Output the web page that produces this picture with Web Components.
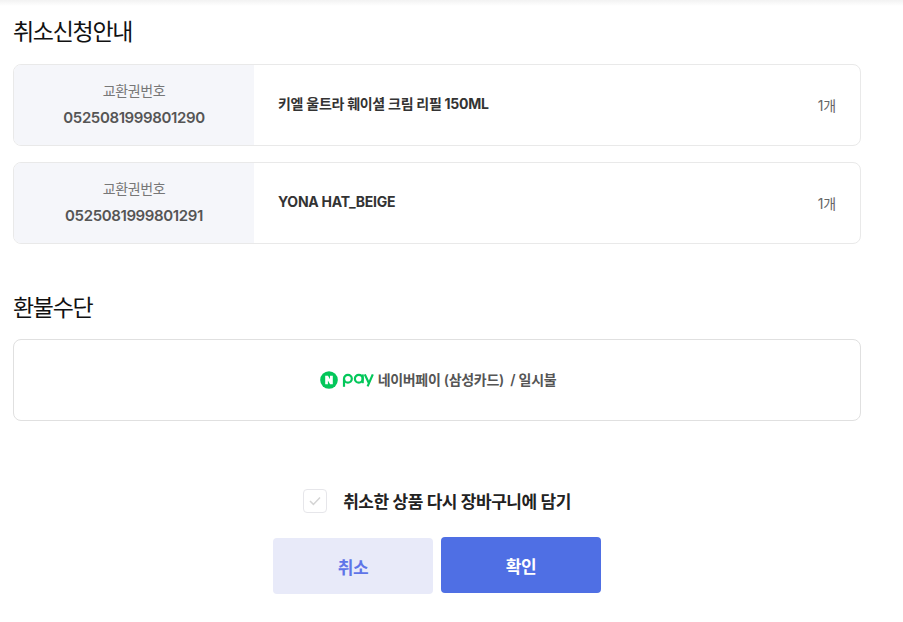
<!DOCTYPE html>
<html lang="ko">
<head>
<meta charset="utf-8">
<style>
html, body { margin: 0; padding: 0; background: #fff; }
body { font-family: Inter, "Noto Sans CJK KR", sans-serif; height: 622px; overflow: hidden; }
</style>
</head>
<body>
<cancel-page>
  <section-title>취소신청안내</section-title>
  <voucher-row no="0525081999801290" name="키엘 울트라 훼이셜 크림 리필 150ML" qty="1개"></voucher-row>
  <voucher-row no="0525081999801291" name="YONA HAT_BEIGE" qty="1개"></voucher-row>
  <section-title class="second">환불수단</section-title>
  <refund-box>네이버페이 (삼성카드)&nbsp; / 일시불</refund-box>
  <cart-check>취소한 상품 다시 장바구니에 담기</cart-check>
  <action-buttons></action-buttons>
</cancel-page>
<script>
class CancelPage extends HTMLElement {
  constructor() {
    super();
    this.attachShadow({ mode: "open" });
    this.shadowRoot.innerHTML = `
<style>
:host { display: block; width: 848px; padding: 0 0 0 13px; box-sizing: content-box; }
.top { display: block; height: 6px; margin: 0 -42px 0 -13px; width: 903px; background: linear-gradient(#f2f2f2, #fff); }
.wrap { display: flex; flex-direction: column; }
</style>
<div class="top"></div>
<div class="wrap"><slot></slot></div>`;
  }
}

class SectionTitle extends HTMLElement {
  constructor() {
    super();
    this.attachShadow({ mode: "open" });
    this.shadowRoot.innerHTML = `
<style>
:host { display: block; height: 58px; padding-top: 11px; box-sizing: border-box; font-size: 23px; line-height: 30px; letter-spacing: -1.3px; color: #111; font-weight: 400; }
:host(.second) { margin-top: 33px; height: 46px; padding-top: 0; }
</style>
<slot></slot>`;
  }
}

class VoucherRow extends HTMLElement {
  constructor() {
    super();
    this.attachShadow({ mode: "open" });
    this.shadowRoot.innerHTML = `
<style>
:host { display: flex; height: 82px; box-sizing: border-box; margin-bottom: 16px; border: 1px solid #e9e9e9; border-radius: 8px; overflow: hidden; }
.no { width: 240px; background: #f5f6fa; display: flex; flex-direction: column; align-items: center; padding-top: 16px; box-sizing: border-box; }
.label { font-size: 14px; line-height: 20px; color: #777; letter-spacing: -0.4px; }
.num { font-size: 15px; line-height: 20px; margin-top: 7px; font-weight: 600; color: #555; letter-spacing: -0.38px; }
.info { flex: 1; display: flex; justify-content: space-between; padding: 0 24px; align-items: flex-start; }
.name { font-size: 14px; line-height: 20px; margin-top: 29px; font-weight: 700; color: #333; letter-spacing: -0.27px; }
.qty { font-size: 14px; line-height: 20px; margin-top: 31px; color: #666; letter-spacing: -0.2px; }
</style>
<div class="no"><span class="label">교환권번호</span><span class="num"></span></div>
<div class="info"><span class="name"></span><span class="qty"></span></div>`;
    this.shadowRoot.querySelector(".num").textContent = this.getAttribute("no");
    this.shadowRoot.querySelector(".name").textContent = this.getAttribute("name");
    this.shadowRoot.querySelector(".qty").textContent = this.getAttribute("qty");
  }
}

class RefundBox extends HTMLElement {
  constructor() {
    super();
    this.attachShadow({ mode: "open" });
    this.shadowRoot.innerHTML = `
<style>
:host { display: flex; align-items: center; justify-content: center; gap: 4px; height: 82px; box-sizing: border-box; padding-left: 2px; border: 1px solid #e0e0e0; border-radius: 8px; font-size: 14px; font-weight: 600; letter-spacing: -0.3px; color: #555; }
svg { display: block; }
span { padding-bottom: 2px; }
</style>
<svg width="54" height="18" viewBox="0 0 54 18" aria-hidden="true">
  <circle cx="9" cy="9" r="8.8" fill="#03c75a"/>
  <path d="M5.2 13.2V4.8h2.8l2 3.5V4.8h2.8v8.4h-2.7L7.9 9.5v3.7z" fill="#fff"/>
  <g fill="none" stroke="#03c75a" stroke-width="2.2">
    <circle cx="27.9" cy="7.8" r="3.9"/><path d="M24 7.8v8"/>
    <circle cx="38.8" cy="7.8" r="3.9"/><path d="M42.7 3.4v8.8"/>
    <path d="M44.8 3.4l3.9 8.4M52.8 3.4l-5.2 12"/>
  </g>
</svg>
<span><slot></slot></span>`;
  }
}

class CartCheck extends HTMLElement {
  constructor() {
    super();
    this.attachShadow({ mode: "open" });
    this.shadowRoot.innerHTML = `
<style>
:host { display: flex; align-items: center; justify-content: center; gap: 16px; margin-top: 68px; height: 24px; font-size: 17px; font-weight: 600; letter-spacing: -0.47px; color: #222; }
.box { width: 24px; height: 24px; box-sizing: border-box; border: 1px solid #e6e6ea; border-radius: 4px; display: flex; align-items: center; justify-content: center; }
.text { padding-bottom: 2px; }
</style>
<span class="box"><svg width="12" height="10" viewBox="0 0 12 10" aria-hidden="true"><path d="M1 5l3.4 3.4L11 1.5" fill="none" stroke="#d4d4d4" stroke-width="1.5"/></svg></span>
<span class="text"><slot></slot></span>`;
  }
}

class ActionButtons extends HTMLElement {
  constructor() {
    super();
    this.attachShadow({ mode: "open" });
    this.shadowRoot.innerHTML = `
<style>
:host { display: flex; justify-content: center; gap: 8px; margin-top: 24px; }
button { width: 160px; height: 56px; border: 0; border-radius: 4px; font: 600 17px Inter, "Noto Sans CJK KR", sans-serif; letter-spacing: -0.5px; padding: 0; }
.cancel { background: #e8eaf9; color: #5f75e8; margin-top: 1px; }
.ok { background: #4f6fe4; color: #fff; }
</style>
<button class="cancel">취소</button><button class="ok">확인</button>`;
  }
}

customElements.define("cancel-page", CancelPage);
customElements.define("section-title", SectionTitle);
customElements.define("voucher-row", VoucherRow);
customElements.define("refund-box", RefundBox);
customElements.define("cart-check", CartCheck);
customElements.define("action-buttons", ActionButtons);
</script>
</body>
</html>
